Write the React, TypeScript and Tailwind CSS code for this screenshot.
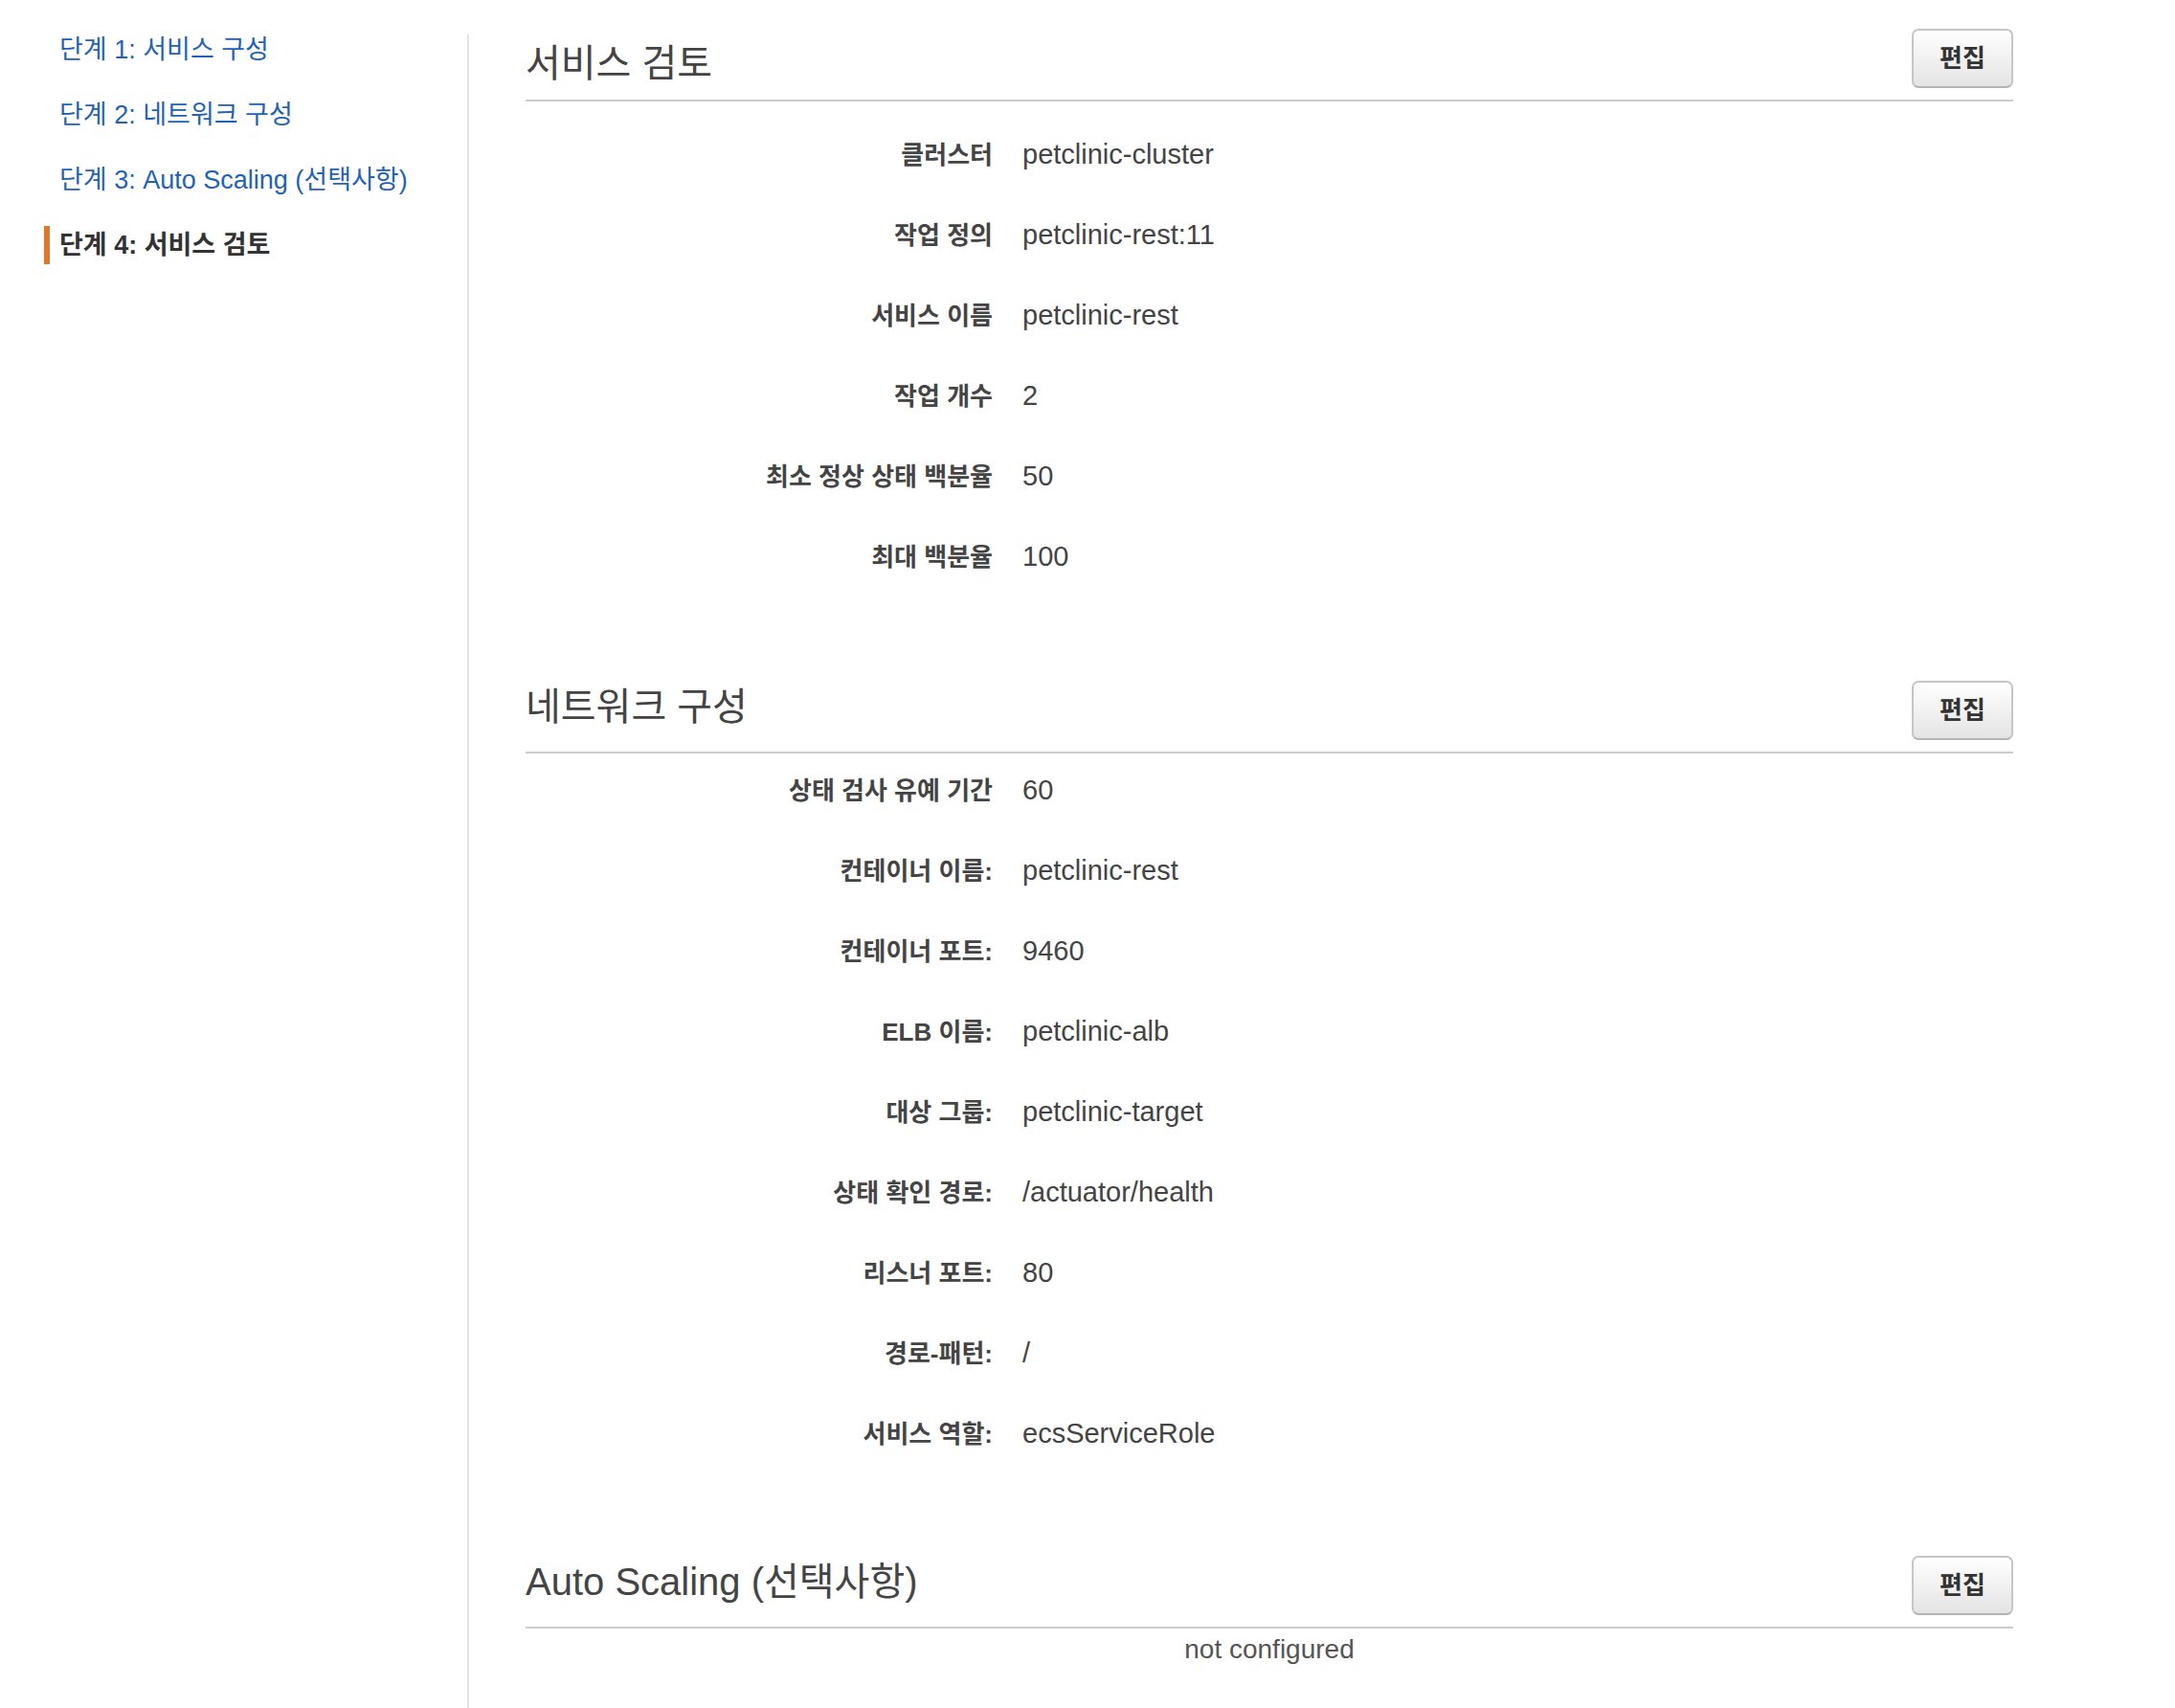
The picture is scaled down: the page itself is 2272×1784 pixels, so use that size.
const steps = [
  { label: "단계 1: 서비스 구성", active: false },
  { label: "단계 2: 네트워크 구성", active: false },
  { label: "단계 3: Auto Scaling (선택사항)", active: false },
  { label: "단계 4: 서비스 검토", active: true },
];

const serviceRows = [
  ["클러스터", "petclinic-cluster"],
  ["작업 정의", "petclinic-rest:11"],
  ["서비스 이름", "petclinic-rest"],
  ["작업 개수", "2"],
  ["최소 정상 상태 백분율", "50"],
  ["최대 백분율", "100"],
];

const networkRows = [
  ["상태 검사 유예 기간", "60"],
  ["컨테이너 이름:", "petclinic-rest"],
  ["컨테이너 포트:", "9460"],
  ["ELB 이름:", "petclinic-alb"],
  ["대상 그룹:", "petclinic-target"],
  ["상태 확인 경로:", "/actuator/health"],
  ["리스너 포트:", "80"],
  ["경로-패턴:", "/"],
  ["서비스 역할:", "ecsServiceRole"],
];

function SectionHeader({ title, first = false }: { title: string; first?: boolean }) {
  return (
    <div>
      <div className="flex items-center justify-between h-[62px]">
        <h2
          className={
            first
              ? "mt-[10px] text-[40px] leading-[48px] font-normal text-[#444]"
              : "mb-[8px] text-[40px] leading-[48px] font-normal text-[#444]"
          }
        >
          {title}
        </h2>
        <button className="w-[106px] h-[62px] rounded-[7px] border-2 border-[#c6c6c6] border-b-[#b4b4b4] bg-gradient-to-b from-white to-[#e4e4e4] text-[26px] font-bold text-[#333]">
          편집
        </button>
      </div>
      <div className="mt-[12px] h-[2px] bg-[#cccccc]" />
    </div>
  );
}

function Rows({ rows }: { rows: string[][] }) {
  return (
    <div className="flex flex-col gap-[26px]">
      {rows.map(([label, value]) => (
        <div key={label} className="flex items-center h-[58px]">
          <div className="w-[488px] text-right text-[26px] font-bold text-[#444]">{label}</div>
          <div className="ml-[31px] text-[29px] text-[#444]">{value}</div>
        </div>
      ))}
    </div>
  );
}

export default function App() {
  return (
    <div
      className="flex min-h-screen bg-white"
      style={{ fontFamily: '"Liberation Sans", "Noto Sans CJK KR", sans-serif' }}
    >
      {/* Wizard steps */}
      <nav className="w-[488px] shrink-0 pl-[46px] pt-[32px] flex flex-col gap-[28px]">
        {steps.map((s) => (
          <div
            key={s.label}
            className={
              s.active
                ? "flex items-center h-[40px] border-l-[6px] border-[#dd7b2c] pl-[10px] text-[27px] font-bold text-[#333]"
                : "flex items-center h-[40px] border-l-[6px] border-transparent pl-[10px] text-[27px] text-[#1f62b7]"
            }
          >
            {s.label}
          </div>
        ))}
      </nav>

      <div className="w-[2px] shrink-0 mt-[36px] bg-[#e2e2e2]" />

      <main className="ml-[59px] w-[1554px] pt-[30px]">
        <SectionHeader title="서비스 검토" first />
        <div className="mt-[27px]">
          <Rows rows={serviceRows} />
        </div>

        <div className="mt-[100px]">
          <SectionHeader title="네트워크 구성" />
        </div>
        <div className="mt-[10px]">
          <Rows rows={networkRows} />
        </div>

        <div className="mt-[98px]">
          <SectionHeader title="Auto Scaling (선택사항)" />
        </div>
        <div className="mt-[5px] text-center text-[28px] leading-[34px] text-[#555]">not configured</div>
      </main>
    </div>
  );
}
